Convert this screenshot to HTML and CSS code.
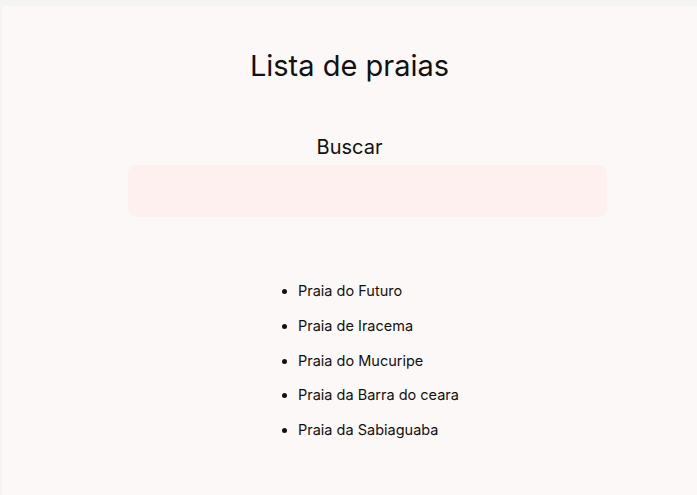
FILE: index.html
```html
<!DOCTYPE html>
<html lang="pt">
<head>
<meta charset="utf-8">
<title>Lista de praias</title>
<link rel="stylesheet" href="styles.css">
</head>
<body>
<main class="app">
  <h1 class="title">Lista de praias</h1>
  <label class="search-label" for="busca">Buscar</label>
  <div class="search-row">
    <input id="busca" class="search-input" type="text">
  </div>
  <ul class="beach-list">
    <li>Praia do Futuro</li>
    <li>Praia de Iracema</li>
    <li>Praia do Mucuripe</li>
    <li>Praia da Barra do ceara</li>
    <li>Praia da Sabiaguaba</li>
  </ul>
</main>
</body>
</html>
```

FILE: styles.css
```css
html, body {
  margin: 0;
  padding: 0;
  height: 100%;
}
body {
  background: #f4f4f4;
  padding: 6px 0 0 2px;
  box-sizing: border-box;
  font-family: Inter, "Noto Sans", sans-serif;
  color: #111;
}
.app {
  background: #fcf8f7;
  min-height: 100%;
  display: flex;
  flex-direction: column;
  align-items: center;
  padding-top: 43px;
  box-sizing: border-box;
}
.title {
  margin: 0;
  font-size: 29px;
  font-weight: 400;
  line-height: 34px;
}
.search-label {
  margin-top: 52px;
  font-size: 20px;
  line-height: 24px;
}
.search-row {
  align-self: stretch;
  display: flex;
  padding-left: 126px;
  margin-top: 6px;
}
.search-input {
  width: 479px;
  height: 52px;
  box-sizing: border-box;
  border: none;
  border-radius: 8px;
  background: #fff0f0;
  outline: none;
}
.beach-list {
  align-self: stretch;
  margin: 64px 0 0;
  padding-left: 296px;
  font-size: 14.5px;
  line-height: 20px;
}
.beach-list li {
  margin-bottom: 14.75px;
}
```
